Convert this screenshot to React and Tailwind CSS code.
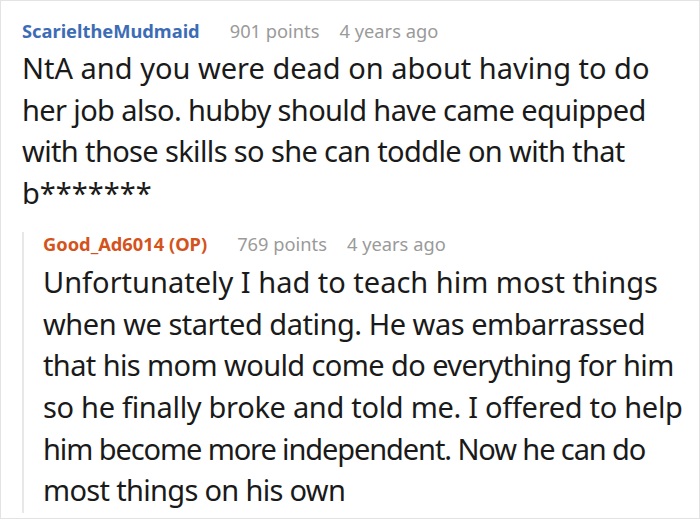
import React from 'react';

// lines are broken as in the source, some of them set a bit tighter
const comment = {
    name: 'ScarieltheMudmaid',
    points: 901,
    ago: '4 years ago',
    lines: [
        ['NtA and you were dead on about having to do', ''],
        ['her job also. hubby should have came equipped', 'tracking-[-0.62px]'],
        ['with those skills so she can toddle on with that', 'tracking-[-0.63px]'],
        ['b*******', ''],
    ],
};

const reply = {
    name: 'Good_Ad6014 (OP)',
    points: 769,
    ago: '4 years ago',
    lines: [
        ['Unfortunately I had to teach him most things', ''],
        ['when we started dating. He was embarrassed', 'tracking-[-0.48px]'],
        ['that his mom would come do everything for him', 'tracking-[-0.6px]'],
        ['so he finally broke and told me. I offered to help', 'tracking-[-0.3px]'],
        ['him become more independent. Now he can do', 'tracking-[-1.1px]'],
        ['most things on his own', 'tracking-[-0.68px]'],
    ],
};

const Meta = ({ name, points, ago, nameClass }) => (
    <div className="flex items-baseline text-[18.3px] leading-[24px]">
        <span className={`font-bold ${nameClass}`}>{name}</span>
        <span className="ml-[30px] text-[#9a9a9a]">{points} points</span>
        <span className="ml-[20px] text-[#9a9a9a]">{ago}</span>
    </div>
);

const Body = ({ lines, className }) => (
    <p className={`text-[29px] leading-[41.7px] text-[#1a1a1a] ${className}`}>
        {lines.map(([text, cls], i) => (
            <span key={i} className={`block whitespace-nowrap ${cls}`}>{text}</span>
        ))}
    </p>
);

export default function App() {
    return (
        <div
            className="w-[700px] h-[519px] bg-white border border-[#e3e3e3] overflow-hidden"
            style={{ fontFamily: '"Noto Sans", sans-serif' }}
        >
            <div className="pl-[21px] pr-[3px] pt-[18px]">
                <Meta name={comment.name} points={comment.points} ago={comment.ago} nameClass="text-[#3d6cb6]" />
                <Body lines={comment.lines} className="mt-[4px]" />

                {/* Reply */}
                <div className="mt-[18px] border-l-2 border-[#e8e8e8] pl-[19px] pb-[2px]">
                    <Meta name={reply.name} points={reply.points} ago={reply.ago} nameClass="text-[#d4531c]" />
                    <Body lines={reply.lines} className="mt-[5px]" />
                </div>
            </div>
        </div>
    );
}
